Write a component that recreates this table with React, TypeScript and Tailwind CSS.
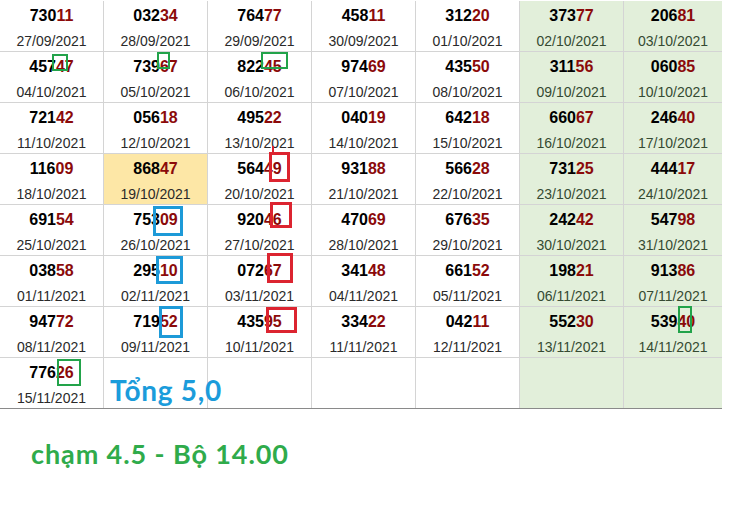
import React from "react";

type Cell = { n: string; d: string } | null;

const rows: Cell[][] = [
  [
    { n: "73011", d: "27/09/2021" },
    { n: "03234", d: "28/09/2021" },
    { n: "76477", d: "29/09/2021" },
    { n: "45811", d: "30/09/2021" },
    { n: "31220", d: "01/10/2021" },
    { n: "37377", d: "02/10/2021" },
    { n: "20681", d: "03/10/2021" },
  ],
  [
    { n: "45747", d: "04/10/2021" },
    { n: "73967", d: "05/10/2021" },
    { n: "82245", d: "06/10/2021" },
    { n: "97469", d: "07/10/2021" },
    { n: "43550", d: "08/10/2021" },
    { n: "31156", d: "09/10/2021" },
    { n: "06085", d: "10/10/2021" },
  ],
  [
    { n: "72142", d: "11/10/2021" },
    { n: "05618", d: "12/10/2021" },
    { n: "49522", d: "13/10/2021" },
    { n: "04019", d: "14/10/2021" },
    { n: "64218", d: "15/10/2021" },
    { n: "66067", d: "16/10/2021" },
    { n: "24640", d: "17/10/2021" },
  ],
  [
    { n: "11609", d: "18/10/2021" },
    { n: "86847", d: "19/10/2021" },
    { n: "56449", d: "20/10/2021" },
    { n: "93188", d: "21/10/2021" },
    { n: "56628", d: "22/10/2021" },
    { n: "73125", d: "23/10/2021" },
    { n: "44417", d: "24/10/2021" },
  ],
  [
    { n: "69154", d: "25/10/2021" },
    { n: "75309", d: "26/10/2021" },
    { n: "92046", d: "27/10/2021" },
    { n: "47069", d: "28/10/2021" },
    { n: "67635", d: "29/10/2021" },
    { n: "24242", d: "30/10/2021" },
    { n: "54798", d: "31/10/2021" },
  ],
  [
    { n: "03858", d: "01/11/2021" },
    { n: "29510", d: "02/11/2021" },
    { n: "07267", d: "03/11/2021" },
    { n: "34148", d: "04/11/2021" },
    { n: "66152", d: "05/11/2021" },
    { n: "19821", d: "06/11/2021" },
    { n: "91386", d: "07/11/2021" },
  ],
  [
    { n: "94772", d: "08/11/2021" },
    { n: "71952", d: "09/11/2021" },
    { n: "43595", d: "10/11/2021" },
    { n: "33422", d: "11/11/2021" },
    { n: "04211", d: "12/11/2021" },
    { n: "55230", d: "13/11/2021" },
    { n: "53940", d: "14/11/2021" },
  ],
];

const boxes: { l: number; t: number; w: number; h: number; c: string; bw: number }[] = [
  { l: 52, t: 54, w: 16, h: 17, c: "#22a34a", bw: 2 },
  { l: 157, t: 52, w: 13, h: 17, c: "#22a34a", bw: 2 },
  { l: 261, t: 52, w: 27, h: 17, c: "#22a34a", bw: 2 },
  { l: 269, t: 152, w: 21, h: 30, c: "#dc2430", bw: 3 },
  { l: 153, t: 206, w: 30, h: 30, c: "#1d9ad8", bw: 3 },
  { l: 270, t: 202, w: 22, h: 26, c: "#dc2430", bw: 3 },
  { l: 156, t: 256, w: 27, h: 28, c: "#1d9ad8", bw: 3 },
  { l: 267, t: 253, w: 26, h: 30, c: "#dc2430", bw: 3 },
  { l: 159, t: 306, w: 24, h: 32, c: "#1d9ad8", bw: 3 },
  { l: 266, t: 307, w: 31, h: 26, c: "#dc2430", bw: 3 },
  { l: 678, t: 306, w: 14, h: 27, c: "#22a34a", bw: 2 },
  { l: 57, t: 359, w: 24, h: 27, c: "#22a34a", bw: 2 },
];

const cellFont = { fontFamily: "'Liberation Sans', Arial, sans-serif" };

function CellView({ cell, col, yellow }: { cell: Cell; col: number; yellow?: boolean }) {
  const green = col >= 5;
  const bg = yellow ? "bg-[#fde7a6]" : green ? "bg-[#e2efda]" : "bg-transparent";
  const border = col < 6 ? "border-r border-r-[#d4d4d4]" : "";
  return (
    <div className={`${bg} ${border} h-full flex flex-col items-center pt-[5px]`}>
      {cell && (
        <>
          <div className="text-[16px] leading-[20px] font-bold text-black scale-y-[1.08]" style={cellFont}>
            {cell.n.slice(0, 3)}
            <span className="text-[#8b0a0a]">{cell.n.slice(3)}</span>
          </div>
          <div
            className={`mt-[4px] text-[14px] leading-[20px] scale-y-[1.1] ${green ? "text-[#354a32]" : "text-[#2a2a2a]"}`}
            style={cellFont}
          >
            {cell.d}
          </div>
        </>
      )}
    </div>
  );
}

export default function App() {
  return (
    <div className="w-[730px] h-[525px] bg-white relative overflow-hidden">
      <div className="relative w-[722px] pt-[1px]">
        {rows.map((r, ri) => (
          <div key={ri} className="grid grid-cols-[104px_104px_104px_104px_104px_104px_98px] h-[51px] border-b border-b-[#d4d4d4]">
            {r.map((c, ci) => (
              <CellView key={ci} cell={c} col={ci} yellow={ri === 3 && ci === 1} />
            ))}
          </div>
        ))}
        <div className="grid grid-cols-[104px_104px_104px_104px_104px_104px_98px] h-[51px] border-b border-b-[#8a8a8a] overflow-hidden">
          <CellView cell={{ n: "77626", d: "15/11/2021" }} col={0} />
          <div className="relative h-full border-r border-r-[#d4d4d4]">
            <div
              className="absolute left-[6px] top-[14px] whitespace-nowrap text-[28px] leading-[36px] font-bold tracking-[0.7px] text-[#1b9cdb]"
              style={{ fontFamily: "Lato, 'Open Sans', sans-serif" }}
            >
              Tổng 5,0
            </div>
          </div>
          <CellView cell={null} col={2} />
          <CellView cell={null} col={3} />
          <CellView cell={null} col={4} />
          <CellView cell={null} col={5} />
          <CellView cell={null} col={6} />
        </div>

        {boxes.map((b, i) => (
          <div
            key={i}
            className="absolute"
            style={{ left: b.l, top: b.t, width: b.w, height: b.h, border: `${b.bw}px solid ${b.c}` }}
          />
        ))}
        <div className="absolute left-[272px] top-[146px] w-[2px] h-[7px] bg-[#dc2430]" />
      </div>

      <div
        className="pl-[31px] pt-[28px] text-[27px] leading-[34px] font-bold tracking-[0.9px] text-[#2fab4b]"
        style={{ fontFamily: "Lato, 'Open Sans', sans-serif" }}
      >
        chạm 4.5 - Bộ 14.00
      </div>
    </div>
  );
}
